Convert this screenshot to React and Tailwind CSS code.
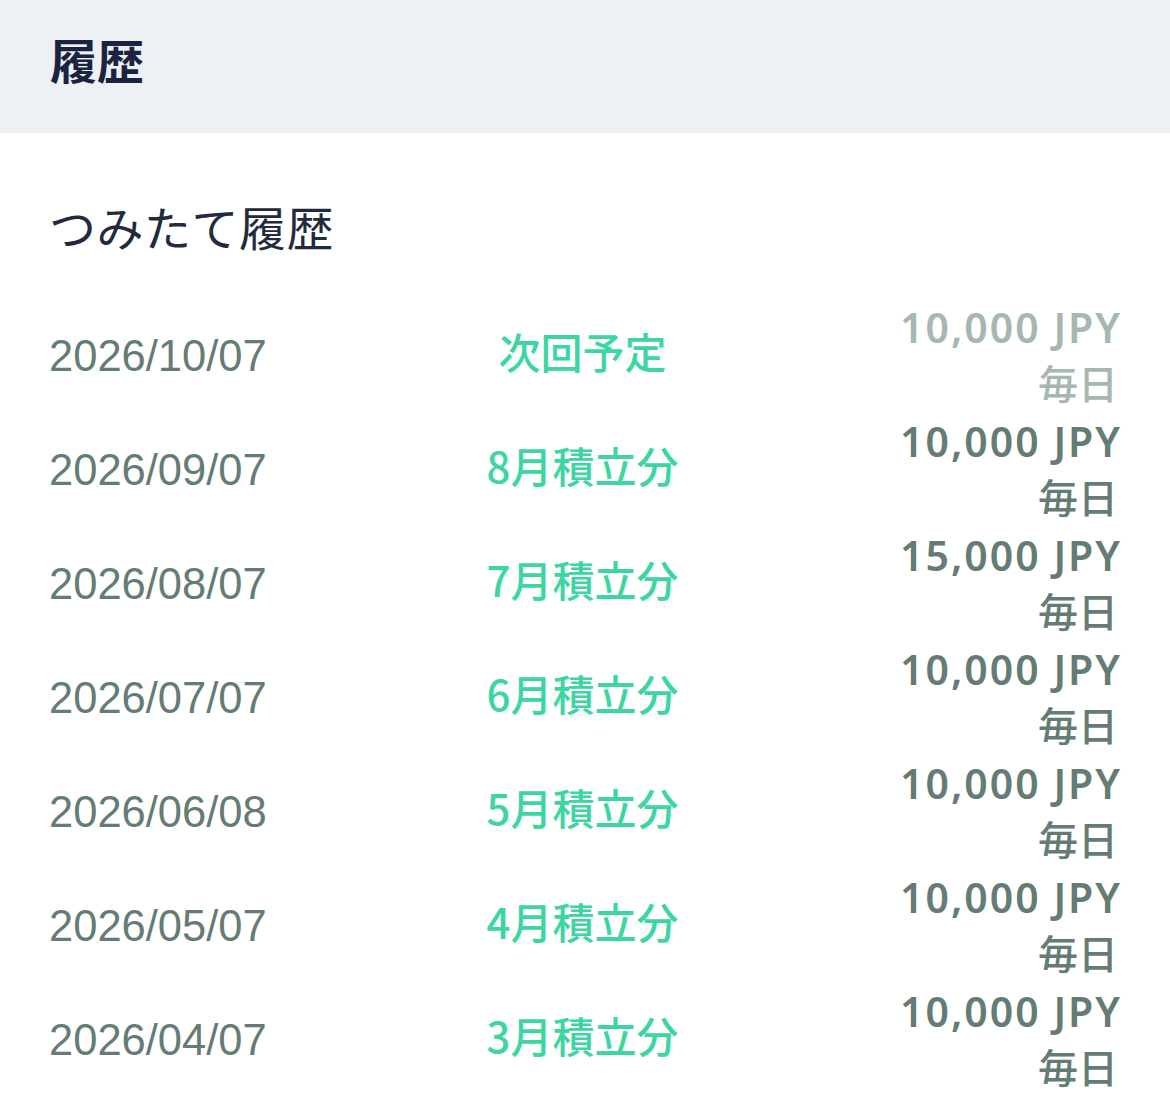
import React from "react";

const rows = [
  { date: "2026/10/07", label: "次回予定", amount: "10,000 JPY", freq: "毎日", next: true },
  { date: "2026/09/07", label: "8月積立分", amount: "10,000 JPY", freq: "毎日" },
  { date: "2026/08/07", label: "7月積立分", amount: "15,000 JPY", freq: "毎日" },
  { date: "2026/07/07", label: "6月積立分", amount: "10,000 JPY", freq: "毎日" },
  { date: "2026/06/08", label: "5月積立分", amount: "10,000 JPY", freq: "毎日" },
  { date: "2026/05/07", label: "4月積立分", amount: "10,000 JPY", freq: "毎日" },
  { date: "2026/04/07", label: "3月積立分", amount: "10,000 JPY", freq: "毎日" },
];

const jp = { fontFamily: '"Noto Sans CJK JP", "Noto Sans", sans-serif' };
const latin = { fontFamily: '"Liberation Sans", "Noto Sans CJK JP", sans-serif' };
const amt = { fontFamily: '"Noto Sans", "Noto Sans CJK JP", sans-serif' };

export default function App() {
  return (
    <div className="w-[1170px] h-[1100px] bg-white overflow-hidden" style={jp}>
      <header className="h-[133px] bg-[#edf0f5] flex items-center px-[50px] pb-[16px]">
        <h1 className="text-[47px] leading-none font-bold text-[#1c2340]">履歴</h1>
      </header>
      <main className="px-[50px]">
        <h2 className="mt-[70px] text-[47px] leading-[46px] font-normal text-[#222a3d] -ml-[1px] tracking-[0.5px]">
          つみたて履歴
        </h2>
        <div className="mt-[51px]">
          {rows.map((r) => (
            <div key={r.date} className="flex items-center h-[114px]">
              <div
                className="flex-1 text-[43.5px] text-[#647c74] -ml-[1px]"
                style={latin}
              >
                {r.date}
              </div>
              <div className="w-[300px] text-center text-[42px] leading-[60px] font-medium text-[#3dd6a3] mb-[12px] -ml-[4px]">
                {r.label}
              </div>
              <div
                className={
                  "flex-1 flex flex-col items-end mb-[4px] " +
                  (r.next ? "text-[#a5b7b0]" : "text-[#647c74]")
                }
              >
                <div
                  className="text-[41px] leading-[55px] font-semibold tracking-[2px] -mr-[2px]"
                  style={amt}
                >
                  {r.amount}
                </div>
                <div className="text-[40px] leading-[55px] font-medium pr-[2px]">
                  {r.freq}
                </div>
              </div>
            </div>
          ))}
        </div>
      </main>
    </div>
  );
}
